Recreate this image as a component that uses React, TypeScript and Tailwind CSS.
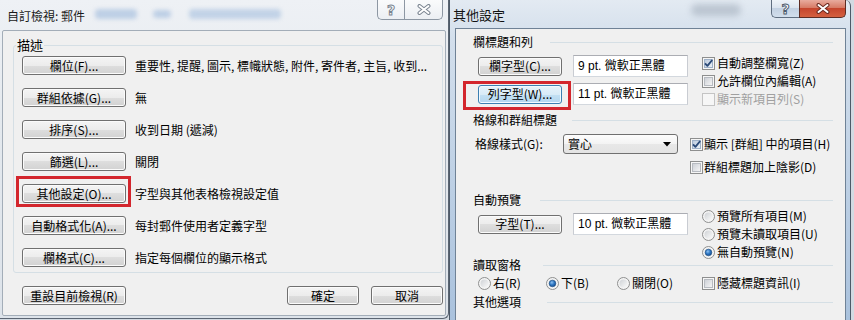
import React from "react";

type BtnProps = { label: string; w: string; focused?: boolean };

function Btn({ label, w, focused }: BtnProps) {
  return (
    <div
      className={`${w} h-[19px] shrink-0 flex items-center justify-center rounded-[3px] border text-[12px] leading-[14px] text-black ${
        focused
          ? "border-[#3c7fb1] bg-[linear-gradient(180deg,#e6f2fa_0%,#d8ebf7_50%,#c3e0f3_50%,#b3d6ee_100%)] shadow-[inset_0_0_0_1px_#f2f9fe]"
          : "border-[#707070] bg-[linear-gradient(180deg,#f4f4f4_0%,#ececec_50%,#dedede_50%,#d2d2d2_100%)] shadow-[inset_0_0_0_1px_#fbfbfb]"
      }`}
    >
      {label}
    </div>
  );
}

function Field({ text }: { text: string }) {
  return (
    <div className="w-[115px] h-[22px] shrink-0 overflow-hidden whitespace-nowrap bg-white border border-[#abadb3] border-l-[#c9ccd2] border-r-[#c9ccd2] border-b-[#d3d8de] flex items-center pl-[4px] text-[12px] leading-[15px] font-['Liberation_Sans','Noto_Sans_CJK_TC',sans-serif] text-black">
      {text}
    </div>
  );
}

function CheckBox({ checked, disabled }: { checked?: boolean; disabled?: boolean }) {
  return (
    <svg width="13" height="13" viewBox="0 0 13 13" className="shrink-0">
      <defs>
        <linearGradient id="cbg" x1="0" y1="0" x2="1" y2="1">
          <stop offset="0" stopColor="#cbcfd5" />
          <stop offset="1" stopColor="#f7f7f7" />
        </linearGradient>
        <linearGradient id="cbgc" x1="0" y1="0" x2="1" y2="1">
          <stop offset="0" stopColor="#b9c8dc" />
          <stop offset="1" stopColor="#eef3f8" />
        </linearGradient>
      </defs>
      <rect x="0.5" y="0.5" width="12" height="12" fill="#f6f6f6" stroke={disabled ? "#c4c4c4" : "#8e8f8f"} />
      {!disabled && (
        <rect x="2.5" y="2.5" width="8" height="8" fill={checked ? "url(#cbgc)" : "url(#cbg)"} stroke={checked ? "#9fb1c8" : "#b7bbc1"} />
      )}
      {checked && (
        <path d="M3 6.3 L5.4 8.8 L10.2 3" stroke="#2b4a78" strokeWidth="1.9" fill="none" strokeLinejoin="round" />
      )}
    </svg>
  );
}

function Radio({ checked }: { checked?: boolean }) {
  return (
    <svg width="13" height="13" viewBox="0 0 13 13" className="shrink-0">
      <defs>
        <linearGradient id="rbg" x1="0" y1="0" x2="1" y2="1">
          <stop offset="0" stopColor="#cfd2d6" />
          <stop offset="1" stopColor="#fafafa" />
        </linearGradient>
        <radialGradient id="rdot" cx="0.4" cy="0.35" r="0.7">
          <stop offset="0" stopColor="#8fc1f0" />
          <stop offset="0.5" stopColor="#2f78c4" />
          <stop offset="1" stopColor="#144a8c" />
        </radialGradient>
      </defs>
      <circle cx="6.5" cy="6.5" r="6" fill="#f4f4f4" stroke="#8e8f8f" />
      <circle cx="6.5" cy="6.5" r="4" fill="url(#rbg)" />
      {checked && <circle cx="6.5" cy="6.5" r="3.3" fill="url(#rdot)" stroke="#1b4b82" strokeWidth="0.6" />}
    </svg>
  );
}

function Check({ label, checked, disabled, gap }: { label: string; checked?: boolean; disabled?: boolean; gap?: string }) {
  return (
    <div className={`flex items-center ${gap ?? "gap-[2px]"}`}>
      <CheckBox checked={checked} disabled={disabled} />
      <span className={`text-[12px] leading-[14px] whitespace-nowrap ${disabled ? "text-[#a0a0a0]" : "text-black"}`}>{label}</span>
    </div>
  );
}

function RadioItem({ label, checked }: { label: string; checked?: boolean }) {
  return (
    <div className="flex items-center gap-[2px]">
      <Radio checked={checked} />
      <span className="text-[12px] leading-[14px] whitespace-nowrap text-black">{label}</span>
    </div>
  );
}

function Header({ text, lineGap, mt }: { text: string; lineGap: string; mt: string }) {
  return (
    <div className={`flex items-center h-[14px] pl-[17px] pr-[12px] ${mt}`}>
      <span className="text-[12px] leading-[14px] whitespace-nowrap">{text}</span>
      <div className={`flex-1 h-px bg-[#d5dfe5] ${lineGap}`} />
    </div>
  );
}

function XGlyph({ outline }: { outline: string }) {
  return (
    <svg width="14" height="11" viewBox="0 0 14 11">
      <path d="M2.5 2 L11.5 9 M11.5 2 L2.5 9" stroke={outline} strokeWidth="4" strokeLinecap="round" />
      <path d="M2.5 2 L11.5 9 M11.5 2 L2.5 9" stroke="#ffffff" strokeWidth="2" strokeLinecap="round" />
    </svg>
  );
}

function RedMark({ cls }: { cls: string }) {
  return <div className={`absolute pointer-events-none border-[3px] border-[#d3262d] ${cls}`} />;
}

const leftRows: [string, string, boolean][] = [
  ["欄位(F)...", "重要性, 提醒, 圖示, 標幟狀態, 附件, 寄件者, 主旨, 收到...", false],
  ["群組依據(G)...", "無", false],
  ["排序(S)...", "收到日期 (遞減)", false],
  ["篩選(L)...", "關閉", false],
  ["其他設定(O)...", "字型與其他表格檢視設定值", true],
  ["自動格式化(A)...", "每封郵件使用者定義字型", false],
  ["欄格式(C)...", "指定每個欄位的顯示格式", false],
];

function LeftWindow() {
  return (
    <div className="w-[449px] h-[319px] shrink-0 flex flex-col border-r border-b border-[#5b6572] rounded-br-[6px] bg-[linear-gradient(180deg,#eef1f5_0%,#e4e9ee_40%,#dde3ea_100%)]">
      <div className="h-[30px] flex items-start overflow-hidden">
        <span className="ml-[7px] mt-[9px] text-[12px] leading-[14px] text-[#1a1a1a] whitespace-nowrap">自訂檢視: 郵件</span>
        <div className="ml-[10px] mt-[9px] w-[42px] h-[10px] rounded-[4px] bg-[#8fb0d8]/50 blur-[2px]" />
        <div className="ml-[16px] mt-[10px] w-[18px] h-[8px] rounded-[4px] bg-[#8fb0d8]/50 blur-[2px]" />
        <div className="ml-[18px] mt-[9px] w-[92px] h-[10px] rounded-[4px] bg-[#8fb0d8]/45 blur-[2px]" />
        <div className="flex-1" />
        <div className="flex mr-[5px]">
          <div className="w-[27px] h-[20px] flex items-center justify-center rounded-bl-[5px] border border-t-0 border-r-0 border-[#8d97a3] bg-[linear-gradient(180deg,#fafbfc,#eceff3)]">
            <span className="text-[14px] leading-[14px] font-bold font-['DejaVu_Sans',sans-serif] text-white [-webkit-text-stroke:1px_#7b8591]">?</span>
          </div>
          <div className="w-[39px] h-[20px] flex items-center justify-center rounded-br-[5px] border border-t-0 border-[#8d97a3] bg-[linear-gradient(180deg,#fafbfc,#eceff3)]">
            <XGlyph outline="#7b8591" />
          </div>
        </div>
      </div>
      <div className="ml-[2px] mr-[2px] h-[286px] bg-[#f0f0f0] border border-[#a3adb8] rounded-[2px] flex flex-col">
        <fieldset className="ml-[10px] mr-[2px] mt-[7px] border border-[#d5dfe5] rounded-[3px]">
          <legend className="ml-[2px] px-[1px] text-[13px] leading-[14px]">描述</legend>
          <div className="flex flex-col gap-[13px] pl-[8px] pt-[4px] pb-[5px]">
            {leftRows.map(([b, t, hl]) => (
              <div key={b} className="flex items-center h-[19px]">
                <div className="relative">
                  <Btn label={b} w="w-[104px]" />
                  {hl && <RedMark cls="-left-[6px] -right-[5px] -top-[8px] -bottom-[4px]" />}
                </div>
                <span className="ml-[9px] text-[12px] leading-[14px] whitespace-nowrap">{t}</span>
              </div>
            ))}
          </div>
        </fieldset>
        <div className="flex items-center mt-[13px] ml-[19px] mr-[2px]">
          <Btn label="重設目前檢視(R)" w="w-[104px]" />
          <div className="flex-1" />
          <Btn label="確定" w="w-[72px]" />
          <div className="w-[12px]" />
          <Btn label="取消" w="w-[72px]" />
        </div>
      </div>
    </div>
  );
}

function RightWindow() {
  return (
    <div className="w-[402px] h-[320px] shrink-0 flex flex-col border-l border-r border-[#4d5a69] rounded-tr-[6px] bg-[linear-gradient(180deg,#e3eaf2_0%,#d3dfec_12%,#bccfe4_60%,#aac2dd_100%)]">
      <div className="h-[28px] flex items-start overflow-hidden">
        <span className="ml-[3px] mt-[7px] text-[13px] leading-[15px] text-[#111] whitespace-nowrap">其他設定</span>
        <div className="flex-1" />
        <div className="mt-[4px] mr-[30px] w-[50px] h-[12px] rounded-[6px] bg-[#9aa6b3]/50 blur-[3px]" />
        <div className="flex mr-[4px]">
          <div className="w-[28px] h-[18px] flex items-center justify-center rounded-bl-[5px] border border-t-0 border-r-0 border-[#5f6e80] bg-[linear-gradient(180deg,#eef3f8_0%,#dae3ee_50%,#c3d1e2_50%,#d2dfed_100%)]">
            <span className="text-[14px] leading-[14px] font-bold font-['DejaVu_Sans',sans-serif] text-white [-webkit-text-stroke:1px_#4f5d6e]">?</span>
          </div>
          <div className="w-[47px] h-[18px] flex items-center justify-center rounded-br-[5px] border border-t-0 border-[#5d2c23] bg-[linear-gradient(180deg,#e8ab9e_0%,#d77b66_45%,#c5452d_50%,#d4603f_100%)]">
            <XGlyph outline="#6b2a20" />
          </div>
        </div>
      </div>
      <div className="ml-[5px] mr-[4px] flex-1 bg-[#f0f0f0] border border-b-0 border-[#6f8296] flex flex-col">
        <Header text="欄標題和列" lineGap="ml-[17px]" mt="mt-[6px]" />
        <div className="flex h-[54px] mt-[5px]">
          <div className="flex flex-col gap-[6px] pl-[22px] pt-[1px]">
            <div className="flex items-center h-[22px] gap-[11px]">
              <Btn label="欄字型(C)..." w="w-[84px]" />
              <Field text="9 pt. 微軟正黑體" />
            </div>
            <div className="flex items-center h-[22px] gap-[11px]">
              <div className="relative">
                <Btn label="列字型(W)..." w="w-[84px]" focused />
                <RedMark cls="-left-[15px] -right-[9px] -top-[4px] -bottom-[6px]" />
              </div>
              <Field text="11 pt. 微軟正黑體" />
            </div>
          </div>
          <div className="flex flex-col ml-[14px]">
            <div className="h-[18px] flex items-center"><Check label="自動調整欄寬(Z)" checked /></div>
            <div className="h-[18px] flex items-center"><Check label="允許欄位內編輯(A)" /></div>
            <div className="h-[18px] flex items-center"><Check label="顯示新項目列(S)" disabled /></div>
          </div>
        </div>
        <Header text="格線和群組標題" lineGap="ml-[15px]" mt="mt-[5px]" />
        <div className="flex mt-[7px]">
          <div className="pl-[19px] w-[107px] h-[20px] flex items-center text-[12px] leading-[14px] whitespace-nowrap">格線樣式(G):</div>
          <div className="w-[115px] h-[20px] shrink-0 rounded-[3px] border border-[#707070] bg-[linear-gradient(180deg,#fdfdfd_0%,#f3f3f3_50%,#e8e8e8_50%,#e3e3e3_100%)] flex items-center pl-[4px] pr-[6px]">
            <span className="text-[12px] leading-[14px]">實心</span>
            <div className="flex-1" />
            <svg width="8" height="5" viewBox="0 0 8 5"><path d="M0 0 H8 L4 4.5 Z" fill="#000" /></svg>
          </div>
          <div className="flex flex-col ml-[12px]">
            <div className="h-[20px] flex items-center"><Check label="顯示 [群組] 中的項目(H)" checked gap="gap-[1px]" /></div>
            <div className="h-[20px] mt-[3px] flex items-center"><Check label="群組標題加上陰影(D)" gap="gap-[1px]" /></div>
          </div>
        </div>
        <Header text="自動預覽" lineGap="ml-[19px]" mt="mt-[16px]" />
        <div className="flex">
          <div className="pl-[22px] pt-[6px]">
            <div className="flex items-center h-[22px] gap-[11px]">
              <Btn label="字型(T)..." w="w-[84px]" />
              <Field text="10 pt. 微軟正黑體" />
            </div>
          </div>
          <div className="flex flex-col ml-[14px]">
            <div className="h-[18px] flex items-center"><RadioItem label="預覽所有項目(M)" /></div>
            <div className="h-[18px] flex items-center"><RadioItem label="預覽未讀取項目(U)" /></div>
            <div className="h-[18px] flex items-center"><RadioItem label="無自動預覽(N)" checked /></div>
          </div>
        </div>
        <Header text="讀取窗格" lineGap="ml-[22px]" mt="-mt-[3px]" />
        <div className="flex items-center h-[18px] mt-[2px] pl-[22px]">
          <div className="w-[68px]"><RadioItem label="右(R)" /></div>
          <div className="w-[71px]"><RadioItem label="下(B)" checked /></div>
          <div className="w-[85px]"><RadioItem label="關閉(O)" /></div>
          <Check label="隱藏標題資訊(I)" />
        </div>
        <Header text="其他選項" lineGap="ml-[26px]" mt="mt-[3px]" />
      </div>
    </div>
  );
}

export default function App() {
  return (
    <div className="w-[854px] h-[320px] overflow-hidden flex bg-[#d3dae2] font-['Noto_Sans_CJK_TC',sans-serif] text-[12px] text-black">
      <LeftWindow />
      <RightWindow />
    </div>
  );
}
